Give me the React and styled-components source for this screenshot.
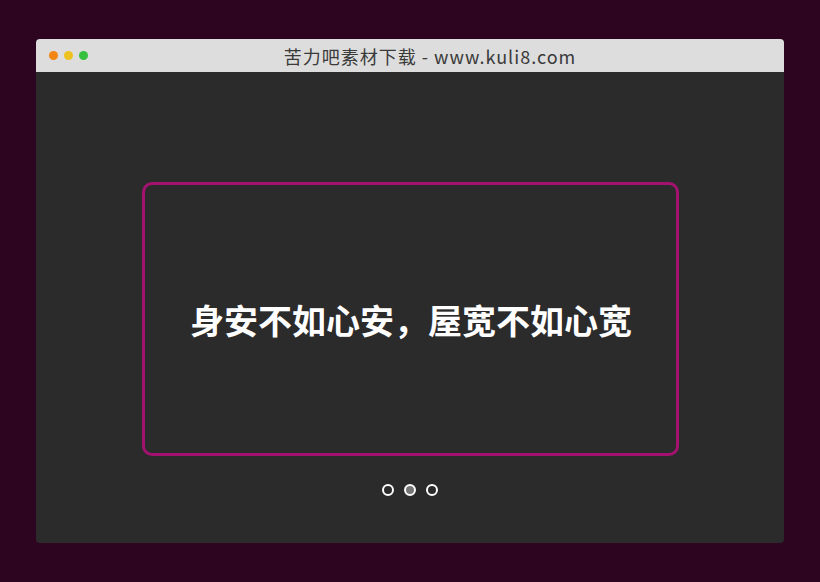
import React from 'react'
import styled, { createGlobalStyle } from 'styled-components'

const Global = createGlobalStyle`
  html, body {
    margin: 0;
    padding: 0;
    background: #2d0520;
    font-family: "Noto Sans", "Noto Sans CJK SC", sans-serif;
  }
`

const App = () => {
  return (
    <Page>
      <Global />
      <Window>
        <TitleBar>
          <Lights>
            <Light color="#f58512" />
            <Light color="#eec21e" />
            <Light color="#35c03e" />
          </Lights>
          <Title>苦力吧素材下载 - www.kuli8.com</Title>
        </TitleBar>
        <Body>
          <Slide>
            <Quote>身安不如心安，屋宽不如心宽</Quote>
          </Slide>
          <Pager>
            <PagerDot />
            <PagerDot active />
            <PagerDot />
          </Pager>
        </Body>
      </Window>
    </Page>
  )
}

const Page = styled.div`
  width: 820px;
  height: 582px;
  box-sizing: border-box;
  padding: 39px 36px 39px;
`

const Window = styled.div`
  width: 748px;
  height: 504px;
  border-radius: 4px;
  overflow: hidden;
  display: flex;
  flex-direction: column;
  background: #2b2b2b;
`

const TitleBar = styled.div`
  height: 33px;
  flex-shrink: 0;
  background: #dddddd;
  position: relative;
  display: flex;
  align-items: center;
  justify-content: center;
`

const Lights = styled.div`
  position: absolute;
  left: 13px;
  top: 12px;
  display: flex;
  gap: 6px;
`

const Light = styled.span`
  width: 9px;
  height: 9px;
  border-radius: 50%;
  background: ${p => p.color};
`

const Title = styled.div`
  font-family: "Noto Sans CJK SC", sans-serif;
  font-weight: 400;
  font-size: 18px;
  color: #3a3a3a;
  padding-left: 40px;
  letter-spacing: 1px;
`

const Body = styled.div`
  flex: 1;
  display: flex;
  flex-direction: column;
  align-items: center;
  padding-top: 110px;
`

const Slide = styled.div`
  width: 537px;
  height: 274px;
  box-sizing: border-box;
  border: 3px solid #a3126f;
  border-radius: 10px;
  display: flex;
  align-items: center;
  justify-content: center;
`

const Quote = styled.div`
  font-family: "Noto Sans CJK SC", sans-serif;
  font-weight: 700;
  font-size: 34px;
  color: #fff;
  margin-left: 2px;
`

const Pager = styled.div`
  display: flex;
  gap: 10px;
  margin-top: 28px;
`

const PagerDot = styled.span`
  width: 12px;
  height: 12px;
  box-sizing: border-box;
  border-radius: 50%;
  border: 2px solid #fff;
  background: ${p => (p.active ? '#777' : 'transparent')};
`

export default App
